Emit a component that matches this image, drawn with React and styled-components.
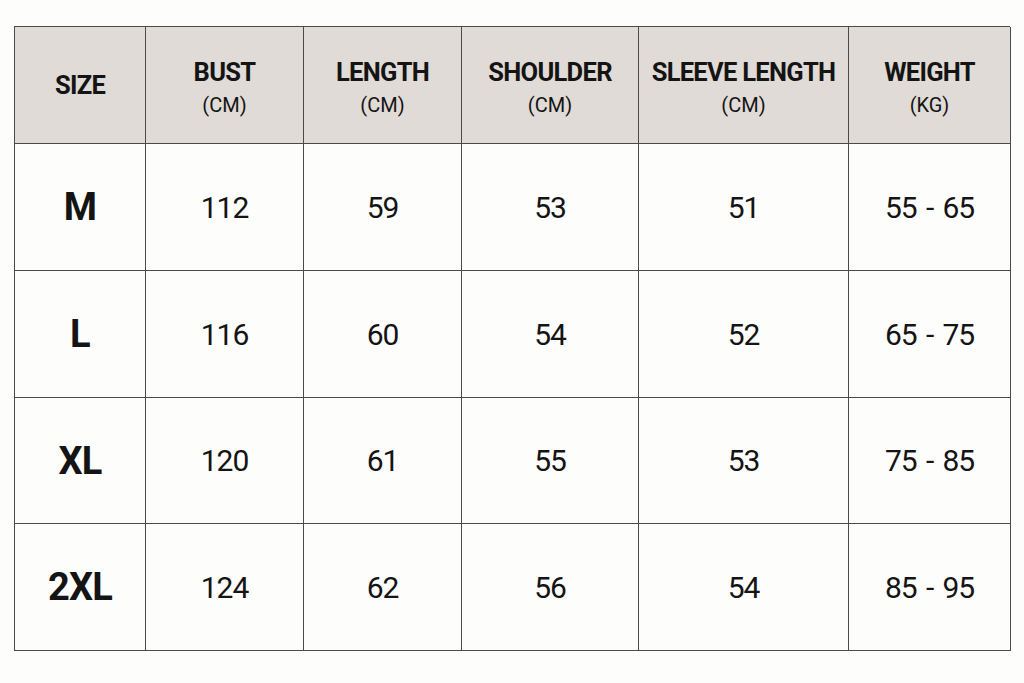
import React from "react";
import styled, { createGlobalStyle } from "styled-components";

const GlobalStyle = createGlobalStyle`
  html, body {
    margin: 0;
    padding: 0;
    background: #fdfdfc;
  }
  body {
    font-family: Roboto, "Liberation Sans", sans-serif;
    color: #141414;
  }
`;

const columns = [
  { title: "SIZE", width: 131 },
  { title: "BUST", unit: "(CM)", width: 158 },
  { title: "LENGTH", unit: "(CM)", width: 158 },
  { title: "SHOULDER", unit: "(CM)", width: 177 },
  { title: "SLEEVE LENGTH", unit: "(CM)", width: 210 },
  { title: "WEIGHT", unit: "(KG)", width: 162 },
];

const rows = [
  ["M", "112", "59", "53", "51", "55 - 65"],
  ["L", "116", "60", "54", "52", "65 - 75"],
  ["XL", "120", "61", "55", "53", "75 - 85"],
  ["2XL", "124", "62", "56", "54", "85 - 95"],
];

const Page = styled.div`
  width: 1024px;
  height: 683px;
  padding: 26px 0 0 14px;
  box-sizing: border-box;
`;

const Table = styled.div`
  display: grid;
  grid-template-columns: ${(p) => p.cols};
  grid-template-rows: 117px 127px 127px 126px 127px;
  width: 996px;
  border-top: 1.5px solid #4a4a4a;
  border-left: 1.5px solid #4a4a4a;
  box-sizing: border-box;
`;

const Cell = styled.div`
  display: flex;
  flex-direction: column;
  align-items: center;
  justify-content: center;
  border-right: 1.5px solid #4a4a4a;
  border-bottom: 1.5px solid #4a4a4a;
  background: ${(p) => (p.head ? "#e0dbd6" : "#fdfdfc")};
`;

const HeadTitle = styled.span`
  font-size: 25.5px;
  font-weight: 700;
  line-height: 30px;
  letter-spacing: -0.7px;
  margin-top: ${(p) => (p.single ? "0" : "4px")};
`;

const HeadUnit = styled.span`
  font-size: 20px;
  font-weight: 400;
  line-height: 26px;
  margin-top: 5px;
`;

const SizeLabel = styled.span`
  font-size: 38px;
  font-weight: 700;
  letter-spacing: -0.8px;
`;

const Value = styled.span`
  font-size: 30px;
  font-weight: 400;
  letter-spacing: -1.1px;
  word-spacing: 3px;
`;

export default function App() {
  return (
    <>
      <GlobalStyle />
      <Page>
        <Table cols={columns.map((c) => `${c.width}px`).join(" ")}>
          {columns.map((c) => (
            <Cell head key={c.title}>
              <HeadTitle single={!c.unit}>{c.title}</HeadTitle>
              {c.unit && <HeadUnit>{c.unit}</HeadUnit>}
            </Cell>
          ))}
          {rows.map((r) =>
            r.map((v, i) => (
              <Cell key={r[0] + i}>
                {i === 0 ? <SizeLabel>{v}</SizeLabel> : <Value>{v}</Value>}
              </Cell>
            ))
          )}
        </Table>
      </Page>
    </>
  );
}
